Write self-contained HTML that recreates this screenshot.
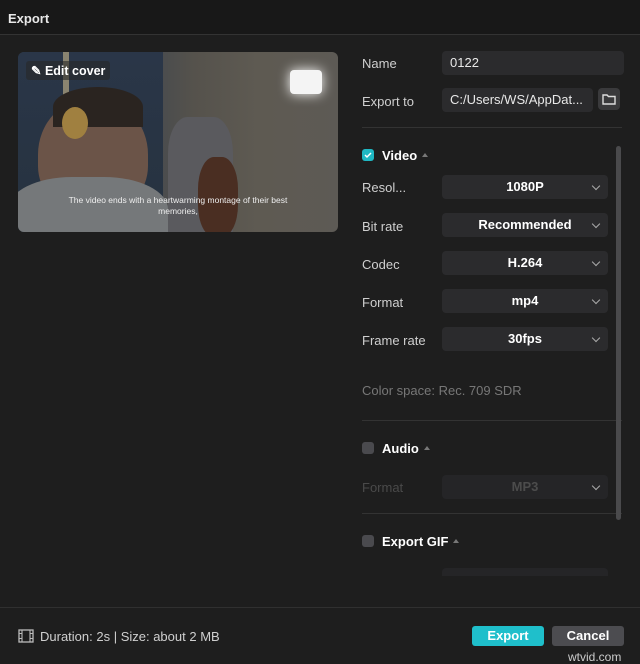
<!DOCTYPE html>
<html><head><meta charset="utf-8"><style>
*{margin:0;padding:0;box-sizing:border-box}
body{width:640px;height:663px;background:#1e1e1e;font-family:"Liberation Sans",sans-serif;color:#d8d8d8;position:relative;overflow:hidden;font-size:13px}
.a{position:absolute}
.lbl{position:absolute;left:362px;font-size:13px;color:#cfcfcf}
.fld{position:absolute;background:#2b2b2d;border-radius:4px;height:24px}
.sel{left:442px;width:166px;text-align:center;font-weight:bold;color:#fff;line-height:24px;font-size:13px}
.sel:after{content:"";position:absolute;right:9px;top:8px;width:5px;height:5px;border-right:1.5px solid #aaa;border-bottom:1.5px solid #aaa;transform:rotate(45deg)}
.hd{position:absolute;left:382px;font-weight:bold;color:#fff;font-size:13px}
.hd:after{content:"";display:inline-block;margin-left:5px;border:3.5px solid transparent;border-bottom:4px solid #777;vertical-align:3px}
.cb{position:absolute;left:362px;width:12px;height:12px;border-radius:3px;background:#4a4a4e}
.hr{position:absolute;left:362px;width:260px;height:1px;background:#333}
</style></head><body>
<div class="a" style="left:0;top:0;width:640px;height:35px;background:#181818;border-bottom:1px solid #333"></div>
<div class="a" style="left:8px;top:11px;font-weight:bold;color:#e8e8e8;font-size:13px">Export</div>

<div class="a" style="left:18px;top:52px;width:320px;height:180px;border-radius:6px;overflow:hidden;background:linear-gradient(90deg,#2e3a4a 0%,#3b4450 30%,#55524c 55%,#5e5a52 75%,#5d5a55 100%)">
 <div class="a" style="left:0;top:0;width:145px;height:180px;background:linear-gradient(180deg,#2a3648,#26323f)"></div>
 <div class="a" style="left:45px;top:0;width:6px;height:140px;background:#8a8470"></div>
 <div class="a" style="left:20px;top:45px;width:110px;height:115px;border-radius:50% 50% 40% 40%;background:#6b5448"></div>
 <div class="a" style="left:35px;top:35px;width:90px;height:40px;border-radius:50% 50% 0 0;background:#2a2420"></div>
 <div class="a" style="left:-10px;top:125px;width:160px;height:80px;border-radius:40% 40% 0 0;background:#75787a"></div>
 <div class="a" style="left:44px;top:55px;width:26px;height:32px;border-radius:50%;background:#a08040"></div>
 <div class="a" style="left:150px;top:65px;width:65px;height:120px;border-radius:30% 30% 0 0;background:#5a5a5e"></div>
 <div class="a" style="left:180px;top:105px;width:40px;height:80px;border-radius:40%;background:#4a2e22"></div>
 <div class="a" style="left:272px;top:18px;width:32px;height:24px;border-radius:4px;background:#f4f4f4;box-shadow:0 0 12px #fff"></div>
 <div class="a" style="left:0;top:143px;width:320px;text-align:center;font-size:8.5px;color:#eee;line-height:11px">The video ends with a heartwarming montage of their best<br>memories,</div>
 <div class="a" style="left:8px;top:9px;padding:2px 5px;background:rgba(40,40,40,.6);border-radius:3px;color:#fff;font-weight:bold;font-size:12.5px">✎ Edit cover</div>
</div>

<div class="lbl" style="top:56px">Name</div>
<div class="fld" style="left:442px;top:51px;width:182px;padding-left:8px;line-height:24px;color:#e8e8e8">0122</div>
<div class="lbl" style="top:94px">Export to</div>
<div class="fld" style="left:442px;top:88px;width:151px;padding-left:8px;line-height:24px;color:#e8e8e8;white-space:nowrap;overflow:hidden">C:/Users/WS/AppDat...</div>
<div class="fld" style="left:598px;top:88px;width:22px;height:22px;background:#3a3a3c">
 <svg class="a" style="left:4px;top:5px" width="14" height="12" viewBox="0 0 14 12"><path d="M1 2h4l1.5 1.5H13V11H1Z" fill="none" stroke="#ddd" stroke-width="1.4"/></svg></div>
<div class="hr" style="top:127px"></div>

<div class="cb" style="top:149px;background:#1fb8c3"><svg class="a" style="left:2px;top:2px" width="8" height="8" viewBox="0 0 8 8"><path d="M1 4l2 2 4-4" stroke="#fff" stroke-width="1.5" fill="none"/></svg></div>
<div class="hd" style="top:148px">Video</div>
<div class="lbl" style="top:180px">Resol...</div><div class="fld sel" style="top:175px">1080P</div>
<div class="lbl" style="top:219px">Bit rate</div><div class="fld sel" style="top:213px">Recommended</div>
<div class="lbl" style="top:257px">Codec</div><div class="fld sel" style="top:251px">H.264</div>
<div class="lbl" style="top:295px">Format</div><div class="fld sel" style="top:289px">mp4</div>
<div class="lbl" style="top:333px">Frame rate</div><div class="fld sel" style="top:327px">30fps</div>
<div class="lbl" style="top:383px;color:#777">Color space: Rec. 709 SDR</div>
<div class="hr" style="top:420px"></div>

<div class="cb" style="top:442px"></div>
<div class="hd" style="top:441px">Audio</div>
<div class="lbl" style="top:480px;color:#4a4a4a">Format</div><div class="fld sel" style="top:475px;background:#252527;color:#4c4c4c">MP3</div>
<div class="hr" style="top:513px"></div>
<div class="cb" style="top:535px"></div>
<div class="hd" style="top:534px">Export GIF</div>
<div class="fld" style="left:442px;top:568px;width:166px;height:8px;background:#252527;border-radius:4px 4px 0 0"></div>

<div class="a" style="left:616px;top:146px;width:5px;height:374px;background:#4a4a4c;border-radius:3px"></div>

<div class="a" style="left:0;top:607px;width:640px;height:1px;background:#303030"></div>
<svg class="a" style="left:18px;top:629px" width="16" height="14" viewBox="0 0 16 14"><rect x="1" y="1" width="14" height="12" fill="none" stroke="#bbb" stroke-width="1.3"/><path d="M4 1v12M12 1v12M1 4.5h3M1 9.5h3M12 4.5h3M12 9.5h3" stroke="#bbb" stroke-width="1.1"/></svg>
<div class="a" style="left:40px;top:629px;color:#cfcfcf">Duration: 2s | Size: about 2 MB</div>
<div class="a" style="left:472px;top:626px;width:72px;height:20px;background:#1fbfcb;border-radius:3px;color:#fff;font-weight:bold;text-align:center;line-height:20px">Export</div>
<div class="a" style="left:552px;top:626px;width:72px;height:20px;background:#4c4c50;border-radius:3px;color:#fff;font-weight:bold;text-align:center;line-height:20px">Cancel</div>
<div class="a" style="left:568px;top:650px;color:#ccc;font-size:12px">wtvid.com</div>
</body></html>
